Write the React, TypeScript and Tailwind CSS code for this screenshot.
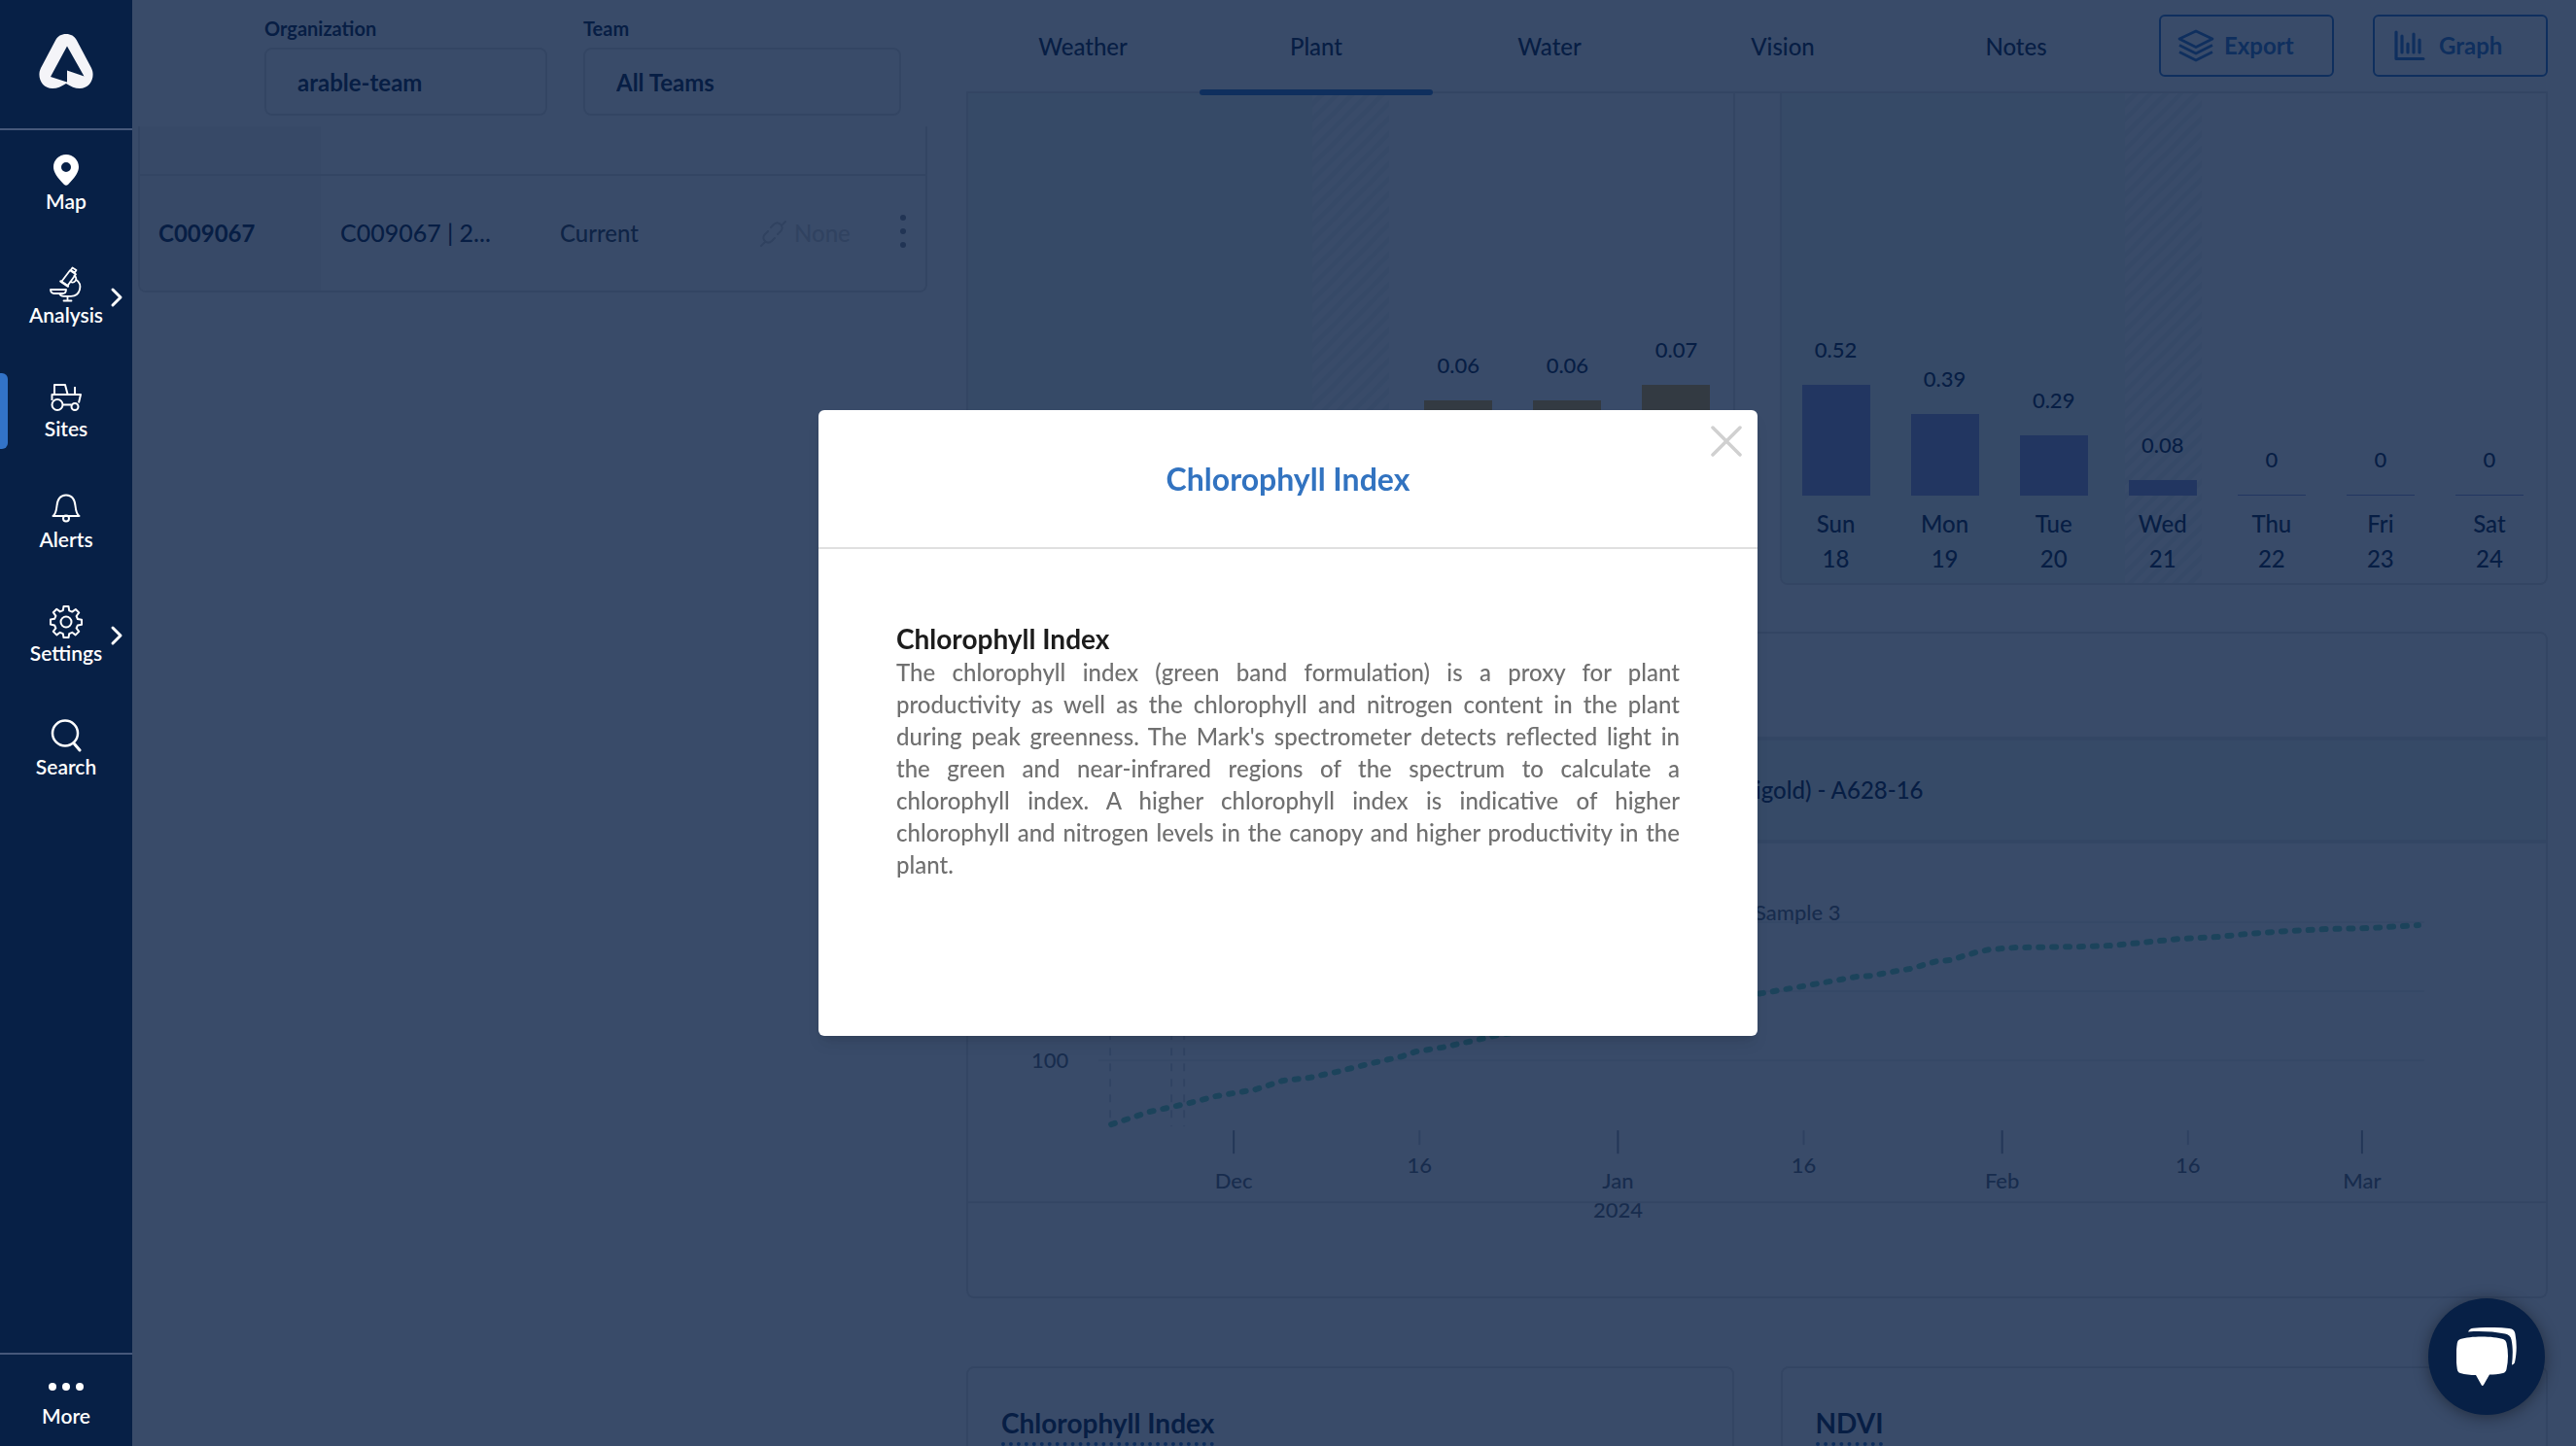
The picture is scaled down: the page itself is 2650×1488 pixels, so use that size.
import React from "react";

type NavItem = {
  label: string;
  icon: React.ReactNode;
  submenu?: boolean;
  active?: boolean;
};

const MapIcon = () => (
  <svg width="26" height="32" viewBox="0 0 26 32" fill="currentColor">
    <path
      fillRule="evenodd"
      d="M13 0C5.8 0 0 5.7 0 12.8 0 18 3.6 23.600 10.800 30.700c1.600 1.500 2.800 1.500 4.400 0C22.400 23.600 26 18 26 12.800 26 5.700 20.200 0 13 0Zm0 8a5 5 0 1 1 0 10 5 5 0 0 1 0-10Z"
    />
  </svg>
);

const MicroscopeIcon = () => (
  <svg width="34" height="38" viewBox="0 0 34 38" fill="none" stroke="currentColor" strokeWidth="1.800" strokeLinejoin="round" strokeLinecap="round">
    <path d="M23.500 2.500 27.500 5 25.800 7.500 21.800 5Z" />
    <path d="M21 5.300 27 9.300 18.500 21 12.300 16.800Z" />
    <path d="M11.500 16.500 18.800 21.500" strokeWidth="2.600" />
    <path d="M25.500 10.500c2 1.300 2.300 3.800 1 5.500-1.200 1.600-3.300 2-5 1" />
    <path d="M27.500 15c3.500 2.300 4.500 6 3.500 10-1.200 4.400-4.500 6.800-9 6.800h-7.500c-2.500 0-4-1.300-4.500-3" />
    <path d="M1 25h16c0 2.500-1.500 4-3.500 4h-9C2.500 29 1 27.500 1 25Z" />
    <path d="M18.500 32v4M14.500 36.500h8" />
  </svg>
);

const TractorIcon = () => (
  <svg width="32" height="28" viewBox="0 0 32 28" fill="none" stroke="currentColor" strokeWidth="2" strokeLinejoin="round">
    <path d="M4 10.500V1h11l2.500 9.500" />
    <path d="M1.500 17V11h29.500l-2 8.500" />
    <path d="M25 3v8M12.500 21.500h9" />
    <circle cx="7" cy="21.500" r="5.500" />
    <circle cx="25" cy="23.500" r="3.500" />
  </svg>
);

const BellIcon = () => (
  <svg width="30" height="30" viewBox="0 0 30 30" fill="none" stroke="currentColor" strokeWidth="2" strokeLinejoin="round">
    <path d="M1.500 23C4.500 21 5 17.500 5.500 12.500 6.200 5 9.500 1.500 15 1.500S23.800 5 24.500 12.500C25 17.500 25.500 21 28.500 23Z" />
    <circle cx="15" cy="25.500" r="3" />
  </svg>
);

const GearIcon = () => (
  <svg width="34" height="34" viewBox="0 0 34 34" fill="none" stroke="currentColor" strokeWidth="2" strokeLinejoin="round">
    <path d="M14.500 1h5l.7 4.300 3 1.300 3.600-2.600 3.400 3.400-2.600 3.600 1.300 3 4.100.7v5l-4.100.7-1.300 3 2.600 3.500-3.500 3.500-3.500-2.600-3 1.300-.7 4H14.500l-.7-4-3-1.300-3.500 2.600-3.500-3.500 2.600-3.500-1.300-3L1 19.500v-5l4.100-.7 1.300-3-2.600-3.600 3.500-3.400 3.500 2.600 3-1.300Z" />
    <circle cx="17" cy="17" r="5.500" />
  </svg>
);

const SearchIcon = () => (
  <svg width="32" height="34" viewBox="0 0 32 34" fill="none" stroke="currentColor" strokeWidth="2.500" strokeLinecap="round">
    <circle cx="15" cy="14.500" r="13" />
    <path d="M24.500 25.500 30 32" strokeWidth="3" />
  </svg>
);

const LayersIcon = () => (
  <svg width="38" height="34" viewBox="0 0 38 34" fill="none" stroke="currentColor" strokeWidth="2.800" strokeLinejoin="round">
    <path d="M19 2 36 10 19 18.500 2 10Z" />
    <path d="M2 16.500 19 25 36 16.500" />
    <path d="M2 23.500 19 32 36 23.500" />
  </svg>
);

const GraphIcon = () => (
  <svg width="32" height="32" viewBox="0 0 32 32" fill="none" stroke="currentColor" strokeWidth="3.200" strokeLinecap="round">
    <path d="M2 2V29.500H30" strokeLinejoin="round" />
    <path d="M8 6v17M14 14v9M20 4v19M26 10v13" />
  </svg>
);

const navItems: NavItem[] = [
  { label: "Map", icon: <MapIcon /> },
  { label: "Analysis", icon: <MicroscopeIcon />, submenu: true },
  { label: "Sites", icon: <TractorIcon />, active: true },
  { label: "Alerts", icon: <BellIcon /> },
  { label: "Settings", icon: <GearIcon />, submenu: true },
  { label: "Search", icon: <SearchIcon /> },
];

function Sidebar() {
  return (
    <aside className="relative z-20 flex w-[136px] shrink-0 flex-col bg-[#072046] text-white">
      <a href="#home" aria-label="Home" className="flex h-[134px] items-center justify-center border-b-2 border-[#46587a] pb-1.5">
        <svg width="56" height="56" viewBox="0 0 56 56" fill="#f4f4f8">
          <path
            fillRule="evenodd"
            d="M28 0c5 0 8.500 2.200 10.800 6.200L54 35c4.500 9-1 21-12 21-5 0-9-2-14-5-5 3-9 5-14 5C3 56-2.500 44 2 35L17.200 6.200C19.500 2.200 23 0 28 0Zm1 12.500L12 44l17 5.500V37.500l17.500 6Z"
          />
        </svg>
      </a>
      <nav className="-mt-0.5 flex flex-1 flex-col">
        {navItems.map((item) => (
          <a
            key={item.label}
            href={"#" + item.label.toLowerCase()}
            className={
              "relative flex flex-col items-center justify-center " + (item.submenu ? "h-[120px]" : "h-[114px]")
            }
          >
            {item.active && <span className="absolute left-0 h-[78px] w-2 rounded-r-md bg-[#3273c8]" />}
            <span className="flex h-9 items-center">{item.icon}</span>
            <span className="text-[21px] leading-7 font-semibold">{item.label}</span>
            {item.submenu && (
              <svg className="absolute right-[9px]" width="14" height="22" viewBox="0 0 14 22" fill="none" stroke="currentColor" strokeWidth="3" strokeLinecap="round" strokeLinejoin="round">
                <path d="M3 3 11 11 3 19" />
              </svg>
            )}
          </a>
        ))}
      </nav>
      <button className="flex h-24 flex-col items-center border-t-2 border-[#46587a] pt-[29px]">
        <svg width="36" height="8" viewBox="0 0 36 8" fill="currentColor">
          <circle cx="4" cy="4" r="4" />
          <circle cx="18" cy="4" r="4" />
          <circle cx="32" cy="4" r="4" />
        </svg>
        <span className="pt-3 text-[21px] leading-7 font-semibold">More</span>
      </button>
    </aside>
  );
}

function Picker({ id, label, value, className }: { id: string; label: string; value: string; className: string }) {
  return (
    <div className={className}>
      <label htmlFor={id} className="block text-[20px] leading-6 font-bold">
        {label}
      </label>
      <select id={id} className="mt-2 h-[70px] w-full appearance-none rounded-lg border-2 border-[#e0e0e0] bg-white px-8 pt-0.5 text-[24px] font-bold">
        <option>{value}</option>
      </select>
    </div>
  );
}

function SitesPanel() {
  return (
    <section className="pr-10 pl-[6px]">
      <div className="flex h-[130px] gap-[37px] pt-[17px] pl-[130px]">
        <Picker id="organization" label="Organization" value="arable-team" className="w-[291px]" />
        <Picker id="team" label="Team" value="All Teams" className="w-[327px]" />
      </div>
      <div className="overflow-hidden rounded-b-lg border-x-2 border-b-2 border-[#e0e0e0]">
        <table className="w-full table-fixed text-left text-[24px]">
          <tbody>
            <tr className="h-[50px] border-b-2 border-[#e0e0e0]">
              <td className="w-[186px] bg-[#f6f6f6]" />
              <td className="w-[226px]" />
              <td className="w-[206px]" />
              <td />
              <td className="w-[46px]" />
            </tr>
            <tr className="h-[119px]">
              <th scope="row" className="bg-[#f6f6f6] pl-[19px] font-bold">
                C009067
              </th>
              <td className="pl-5 text-[25px] font-medium">C009067 | 2...</td>
              <td className="pl-5 font-medium text-[#303c50]">Current</td>
              <td className="pl-5 font-medium text-[#cfcfcf]">
                <div className="flex items-center gap-2">
                  <svg width="27" height="27" viewBox="0 0 27 27" fill="none" stroke="currentColor" strokeWidth="2" strokeLinecap="round">
                    <path d="M1 26 5 22M22 5 26 1M11 7l3-3c2.500-2.300 5-2 7 0s2.200 4.500 0 7l-3 3M8 11l-3 3c-2.300 2.500-2 5 0 7s4.500 2.200 7 0l3-3" />
                  </svg>
                  None
                </div>
              </td>
              <td>
                <button aria-label="Row actions" className="flex w-full justify-center pb-1">
                  <svg width="6" height="34" viewBox="0 0 6 34" fill="#858c98">
                    <circle cx="3" cy="3" r="3" />
                    <circle cx="3" cy="17" r="3" />
                    <circle cx="3" cy="31" r="3" />
                  </svg>
                </button>
              </td>
            </tr>
          </tbody>
        </table>
      </div>
    </section>
  );
}

type Day = { name: string; date: string; value?: string; height: number };

const cropDays: Day[] = [
  { name: "Sun", date: "18", height: 0 },
  { name: "Mon", date: "19", height: 0 },
  { name: "Tue", date: "20", height: 0 },
  { name: "Wed", date: "21", height: 0 },
  { name: "Thu", date: "22", value: "0.06", height: 98 },
  { name: "Fri", date: "23", value: "0.06", height: 98 },
  { name: "Sat", date: "24", value: "0.07", height: 114 },
];

const rainDays: Day[] = [
  { name: "Sun", date: "18", value: "0.52", height: 114 },
  { name: "Mon", date: "19", value: "0.39", height: 84 },
  { name: "Tue", date: "20", value: "0.29", height: 62 },
  { name: "Wed", date: "21", value: "0.08", height: 16 },
  { name: "Thu", date: "22", value: "0", height: 1 },
  { name: "Fri", date: "23", value: "0", height: 1 },
  { name: "Sat", date: "24", value: "0", height: 1 },
];

function DailyChart({ days, barClass }: { days: Day[]; barClass: string }) {
  return (
    <div className="relative h-[506px] overflow-hidden rounded-b-lg border-x-2 border-b-2 border-[#e0e0e0]">
      <div className="absolute inset-0 grid grid-cols-[45fr_10fr_45fr]">
        <div className="bg-[#eef9f4]" />
        <div className="bg-[repeating-linear-gradient(135deg,#ffffff_0px,#ffffff_5px,#f0f6f6_6px,#f0f6f6_10px,#ffffff_11px)]" />
      </div>
      <div className="relative grid h-full grid-cols-7 pr-0.5 pb-[7px]">
        {days.map((day) => (
          <div key={day.name} className="flex flex-col items-center justify-end text-[24px] leading-9 font-medium">
            {day.value && <span className="pb-[18px] text-[22px]">{day.value}</span>}
            <span className={"w-[70px] " + barClass} style={{ height: day.height }} />
            <span className="pt-[11px]">{day.name}</span>
            <span>{day.date}</span>
          </div>
        ))}
      </div>
    </div>
  );
}

const axisTicks = [
  { x: 273, label: "Dec", major: true },
  { x: 464, label: "16", major: false },
  { x: 668, label: "Jan", major: true },
  { x: 859, label: "16", major: false },
  { x: 1063, label: "Feb", major: true },
  { x: 1254, label: "16", major: false },
  { x: 1433, label: "Mar", major: true },
];

function GrowthChart() {
  return (
    <svg className="block w-full" viewBox="0 0 1622 466" fontSize="22" fontWeight="500" fill="#5c6674">
      <g stroke="#eceef0" strokeWidth="2">
        <path d="M134 81H1497M134 152H1497M134 223H1497" />
      </g>
      <g stroke="#d3d6dc" strokeWidth="2" strokeDasharray="8 8">
        <path d="M146 82V291M209 82V291M222 82V291" />
      </g>
      <text x="897" y="79" textAnchor="end">Sample 3</text>
      <text x="84" y="231" textAnchor="middle">100</text>
      <polyline
        fill="none"
        stroke="#6ed7b8"
        strokeWidth="6"
        strokeLinecap="round"
        strokeLinejoin="round"
        strokeDasharray="4 9.900"
        points="147,289 186,276 227,267 254,260 295,253 323,244 350,241 378,235 419,225 446,219 460,214 486,210 514,204 540,198 816,154 857,147 913,137 928,136 955,131 968,129 996,121 1009,120 1036,112 1050,109 1077,107 1147,106 1175,105 1216,101 1245,98 1285,96 1314,93 1356,90 1397,88 1440,87 1491,84"
      />
      {axisTicks.map((tick) => (
        <g key={tick.x} textAnchor="middle">
          <path d={tick.major ? `M${tick.x} 295v24` : `M${tick.x} 295v15`} stroke={tick.major ? "#8f97a5" : "#c9ccd4"} strokeWidth="2" />
          <text x={tick.x} y={tick.major ? 355 : 339}>{tick.label}</text>
        </g>
      ))}
      <text x="668" y="385" textAnchor="middle">2024</text>
      <path d="M0 369H1622" stroke="#e0e0e0" strokeWidth="2" />
    </svg>
  );
}

function PlantPanel() {
  const tabs = ["Weather", "Plant", "Water", "Vision", "Notes"];
  return (
    <section className="pr-[29px]">
      <div className="flex h-24 border-b-2 border-[#e0e0e0]">
        <div role="tablist" className="grid flex-1 grid-cols-5">
          {tabs.map((tab) => (
            <button
              key={tab}
              role="tab"
              aria-selected={tab === "Plant"}
              className="relative h-24 text-[24px] font-medium"
            >
              {tab}
              {tab === "Plant" && <span className="absolute inset-x-0 -bottom-[2px] z-10 h-[6px] rounded-full bg-[#2f74c8]" />}
            </button>
          ))}
        </div>
        <div className="ml-[27px] flex gap-10 pt-[15px] text-[24px] font-bold text-[#2f74c8]">
          <button className="flex h-16 w-[180px] items-center gap-2.5 rounded-md border-2 border-[#2f74c8] px-[17px]">
            <LayersIcon />
            Export
          </button>
          <button className="flex h-16 w-[180px] items-center gap-3.5 rounded-md border-2 border-[#2f74c8] px-5">
            <GraphIcon />
            Graph
          </button>
        </div>
      </div>
      <div className="grid grid-cols-2 gap-[46px]">
        <DailyChart days={cropDays} barClass="bg-[#e0a83c]" />
        <DailyChart days={rainDays} barClass="bg-[#8a94d8]" />
      </div>
      <div className="mt-12 rounded-lg border-2 border-[#e0e0e0]">
        <div className="h-[106px]" />
        <div className="flex h-[110px] items-center justify-center border-y-4 border-[#e0e4e6] bg-[#eef9f4] text-[24px] font-medium">
          <span className="w-[342px] text-right">(Marigold) - A628-16</span>
        </div>
        <GrowthChart />
      </div>
      <div className="mt-[70px] grid grid-cols-2 gap-12">
        {["Chlorophyll Index", "NDVI"].map((title) => (
          <div key={title} className="h-[300px] rounded-lg border-2 border-[#e0e0e0] px-[34px] pt-[38px]">
            <button className="border-b-4 border-dotted border-[#2f74c8] pb-0.5 text-[28px] leading-9 font-bold">{title}</button>
          </div>
        ))}
      </div>
    </section>
  );
}

function InfoDialog() {
  return (
    <div className="fixed inset-0 z-10 grid place-items-center bg-[#081e44]/80">
      <div role="dialog" aria-modal="true" aria-labelledby="dialog-title" className="relative min-h-[644px] w-[966px] rounded-md bg-white shadow-lg">
        <button aria-label="Close" className="absolute top-4 right-4">
          <svg width="32" height="32" viewBox="0 0 32 32" stroke="#d0d0d0" strokeWidth="3.500" strokeLinecap="round">
            <path d="M2 2 30 30M30 2 2 30" />
          </svg>
        </button>
        <h2 id="dialog-title" className="border-b-2 border-[#e0e0e0] pt-[51px] pb-[50px] text-center text-[32px] leading-10 font-bold text-[#3273c0]">
          Chlorophyll Index
        </h2>
        <div className="px-20 pt-[74px]">
          <h3 className="text-[28px] leading-9 font-bold text-[#1c1c1c]">Chlorophyll Index</h3>
          <p className="text-justify text-[24px] leading-[33px] font-medium text-[#707070]">
            The chlorophyll index (green band formulation) is a proxy for plant productivity as well as the chlorophyll
            and nitrogen content in the plant during peak greenness. The Mark's spectrometer detects reflected light in
            the green and near-infrared regions of the spectrum to calculate a chlorophyll index. A higher chlorophyll
            index is indicative of higher chlorophyll and nitrogen levels in the canopy and higher productivity in the
            plant.
          </p>
        </div>
      </div>
    </div>
  );
}

export default function App() {
  return (
    <div className="flex h-screen overflow-hidden bg-white font-['Lato',sans-serif] text-[#072046]">
      <Sidebar />
      <main className="grid flex-1 grid-cols-[minmax(0,858fr)_minmax(0,1656fr)]">
        <SitesPanel />
        <PlantPanel />
      </main>
      <InfoDialog />
      <button aria-label="Open chat" className="fixed right-8 bottom-8 z-30 flex size-[120px] items-center justify-center rounded-full bg-[#072046] shadow-[0_2px_16px_rgba(0,0,0,0.4)]">
        <svg width="62" height="60" viewBox="0 0 62 60" fill="#ffffff">
          <path d="M4 12C14 8.500 38 8.500 48 12c2 .8 3 2 3.500 4 2 9 2 18 0 27-.5 2-1.500 3.500-3.500 4-5 1-9.500 1.500-14 1.500L28 59c-.8 1.300-1.700 1.300-2.400 0L20 49c-5.500 0-11-.5-16-2-2-.5-2.800-2-3.200-4-1.400-9-1.400-18 0-27 .4-2 1.200-3.300 3.200-4Z" />
          <path d="M12 4.500C13 2 15 1 17.500.7 30-.4 42-.3 54 1c4 .4 6 2 6.500 6 1.800 10 1.600 19-.5 29-.5 1.500-2 2.500-3 2.500 1-9 1.300-18-.5-26-.6-3.500-3-5.500-6.500-6C38 4.300 25 3.500 12 4.500Z" />
        </svg>
      </button>
    </div>
  );
}
